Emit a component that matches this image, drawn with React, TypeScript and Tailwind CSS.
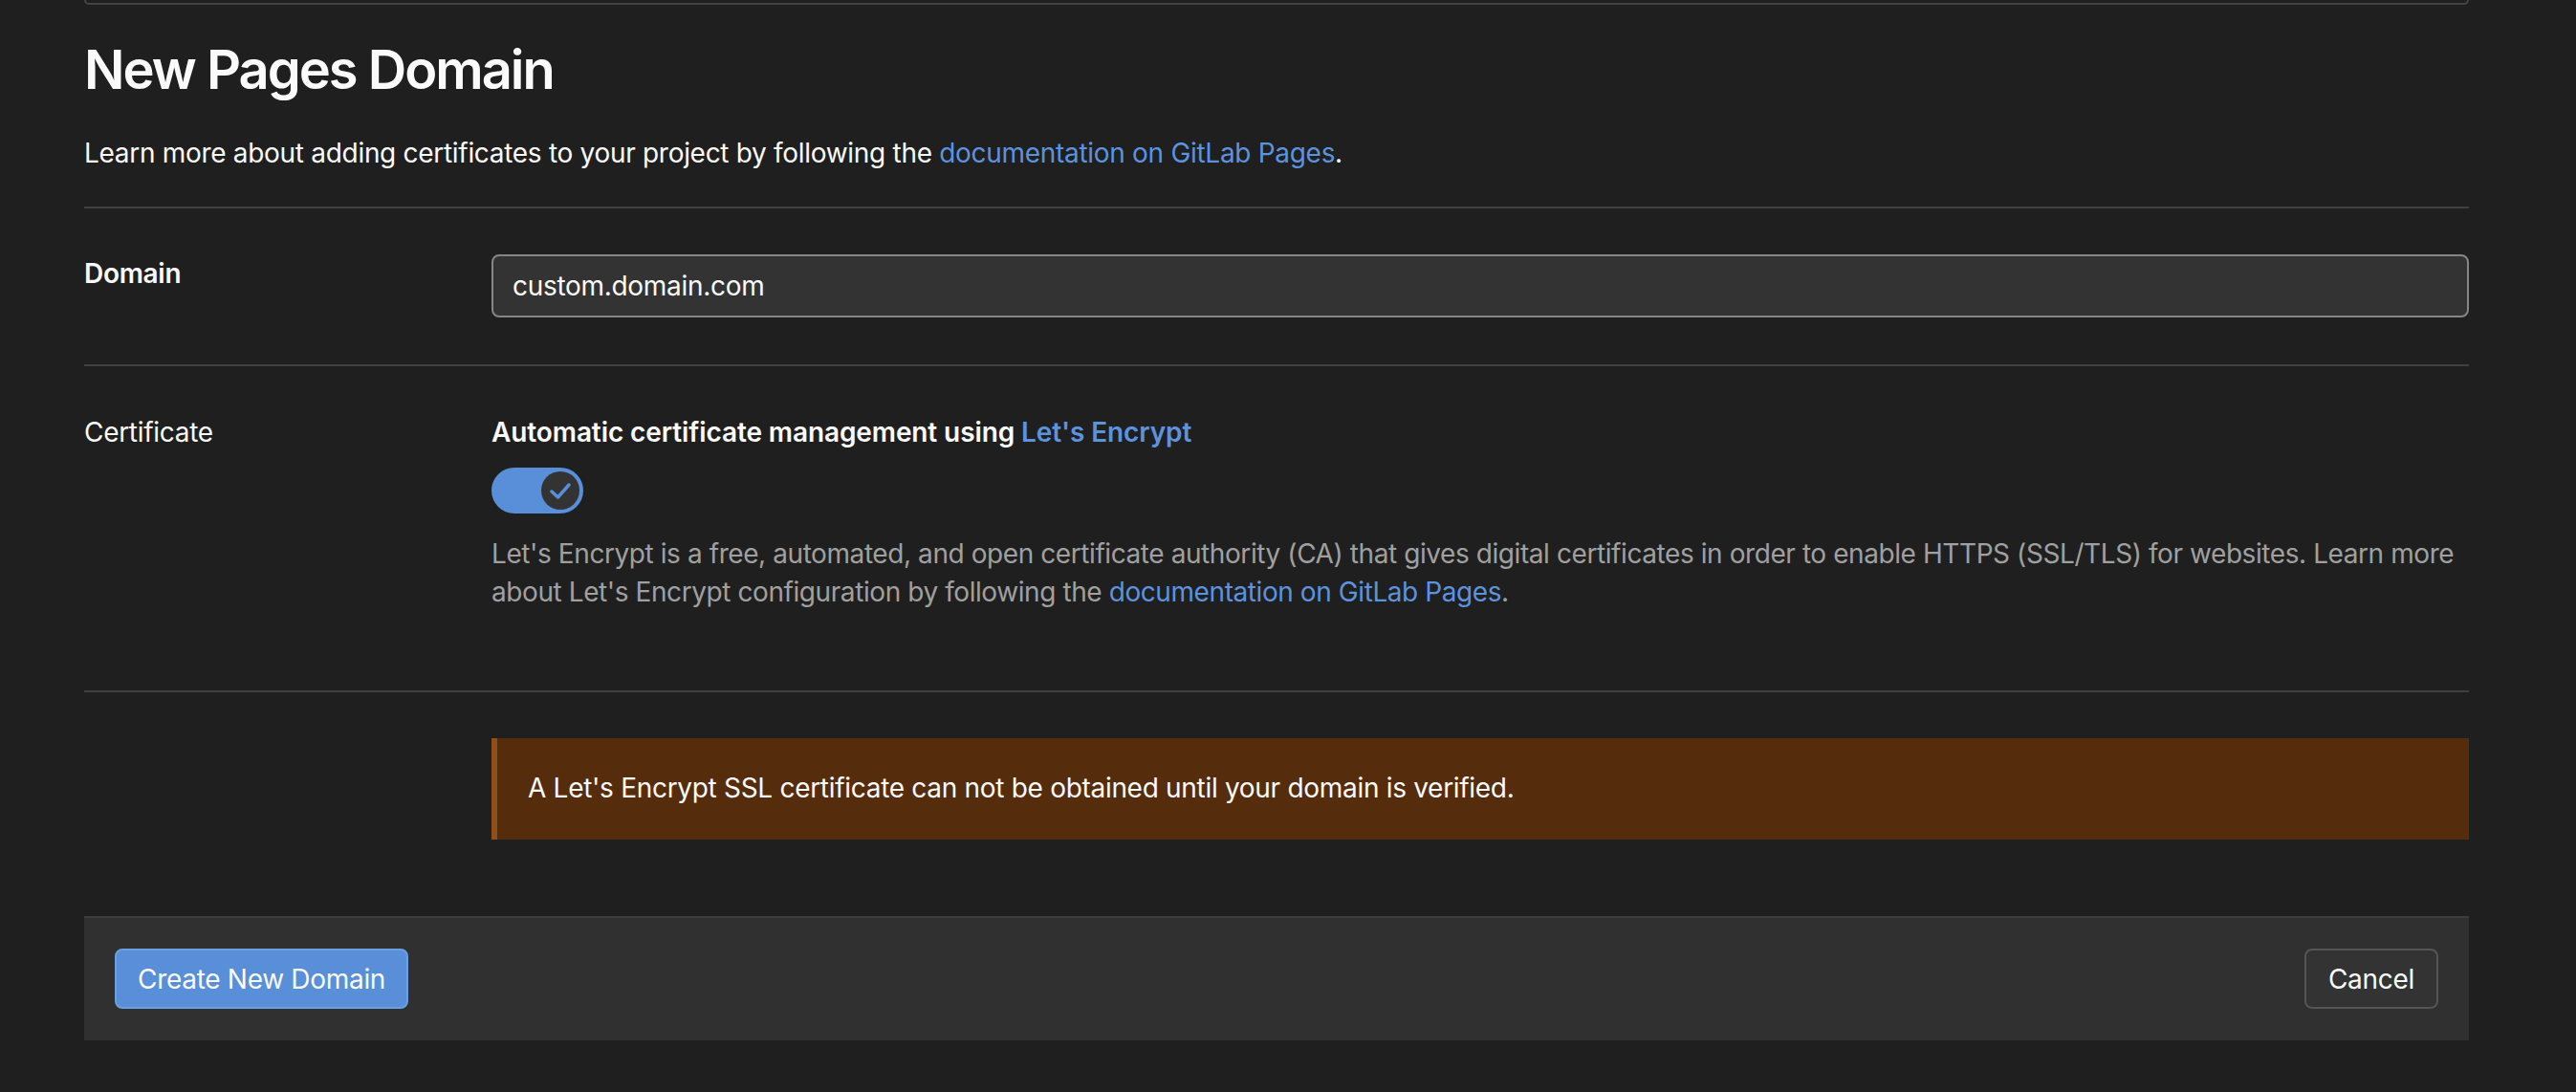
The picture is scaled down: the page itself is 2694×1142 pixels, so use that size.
import { useState } from 'react';

function CheckToggle({ checked, onChange }: { checked: boolean; onChange: () => void }) {
  return (
    <button
      type="button"
      onClick={onChange}
      className={`flex h-[48px] w-[96px] items-center rounded-full p-[4px] ${
        checked ? 'justify-end bg-[#588fd8]' : 'justify-start bg-[#555555]'
      }`}
    >
      <span className="flex h-[40px] w-[40px] items-center justify-center rounded-full bg-[#333333]">
        {checked && (
          <svg width="40" height="40" viewBox="0 0 40 40" fill="none">
            <path
              d="M11 21 L17.5 27 L29 14"
              stroke="#588fd8"
              strokeWidth="3.5"
              strokeLinecap="round"
              strokeLinejoin="round"
            />
          </svg>
        )}
      </span>
    </button>
  );
}

export default function App() {
  const [domain, setDomain] = useState('custom.domain.com');
  const [autoSsl, setAutoSsl] = useState(true);

  return (
    <div className="min-h-screen w-full bg-[#1f1f1f] font-[Inter,sans-serif] text-[28px] leading-[40px] tracking-[-0.3px] text-[#fafafa]">
      <div className="ml-[88px] w-[2494px]">
        {/* bottom edge of the box above */}
        <div className="h-[5px] rounded-b-[8px] border-x-2 border-b-2 border-[#444444]" />

        <h1 className="mt-[34px] text-[56px] font-semibold leading-[68px] tracking-[-2px]">New Pages Domain</h1>
        <p className="mt-[33px]">
          Learn more about adding certificates to your project by following the{' '}
          <a href="#" className="text-[#5d93de]">
            documentation on GitLab Pages
          </a>
          .
        </p>

        <div className="mt-[36px] border-t-2 border-[#404040]" />

        {/* Domain */}
        <div className="grid grid-cols-[426px_1fr] pt-[48px] pb-[49px]">
          <label htmlFor="domain" className="font-semibold">
            Domain
          </label>
          <input
            id="domain"
            value={domain}
            onChange={(e) => setDomain(e.target.value)}
            className="h-[66px] w-full rounded-[8px] border-2 border-[#868686] bg-[#333333] px-[20px] text-[28px] tracking-[-0.3px] text-[#fafafa] outline-none"
          />
        </div>

        <div className="border-t-2 border-[#404040]" />

        {/* Certificate */}
        <div className="grid grid-cols-[426px_1fr] pt-[49px] pb-[83px]">
          <div>Certificate</div>
          <div>
            <div className="font-semibold tracking-[-0.1px]">
              Automatic certificate management using{' '}
              <a href="#" className="text-[#5d93de]">
                Let's Encrypt
              </a>
            </div>
            <div className="mt-[17px]">
              <CheckToggle checked={autoSsl} onChange={() => setAutoSsl(!autoSsl)} />
            </div>
            <p className="mt-[22px] tracking-[-0.42px] text-[#a0a0a0]">
              Let's Encrypt is a free, automated, and open certificate authority (CA) that gives digital
              certificates in order to enable HTTPS (SSL/TLS) for websites. Learn more about Let's Encrypt
              configuration by following the{' '}
              <a href="#" className="text-[#5d93de]">
                documentation on GitLab Pages
              </a>
              .
            </p>
          </div>
        </div>

        <div className="border-t-2 border-[#404040]" />

        {/* Warning */}
        <div className="grid grid-cols-[426px_1fr] pt-[48px]">
          <div />
          <div className="border-l-[6px] border-[#8f4e1a] bg-[#562d0c] py-[32px] pb-[34px] pl-[32px]">
            A Let's Encrypt SSL certificate can not be obtained until your domain is verified.
          </div>
        </div>

        {/* Footer */}
        <div className="mt-[80px] flex items-center justify-between border-t-2 border-[#3c3c3c] bg-[#303030] px-[32px] pt-[32px] pb-[33px]">
          <button
            type="button"
            className="h-[63px] rounded-[8px] border-2 border-[#6c9fe2] bg-[#588fd8] px-[22px] tracking-[-0.3px] text-[#fafafa]"
          >
            Create New Domain
          </button>
          <button
            type="button"
            className="h-[63px] rounded-[8px] border-2 border-[#555555] bg-[#333333] px-[23px] tracking-[-0.3px] text-[#fafafa]"
          >
            Cancel
          </button>
        </div>
      </div>
    </div>
  );
}
